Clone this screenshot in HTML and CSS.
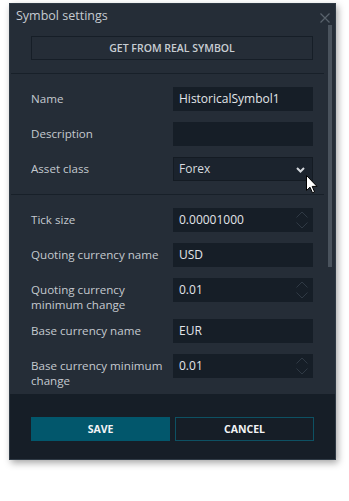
FILE: index.html
```html
<!DOCTYPE html>
<html>
<head>
<meta charset="utf-8">
<link rel="stylesheet" href="styles.css">
</head>
<body>
<div class="dialog">
  <div class="header">
    <span class="title">Symbol settings</span>
    <svg class="close" width="10" height="10" viewBox="0 0 10 10"><path d="M0.5 0.5 L9.5 9.5 M9.5 0.5 L0.5 9.5" stroke="#59626c" stroke-width="1.2" fill="none"/></svg>
  </div>
  <div class="scroll">
    <div class="content">
      <div class="top">
        <button class="btn-outline">GET FROM REAL SYMBOL</button>
      </div>
      <div class="sep"></div>
      <div class="section">
        <div class="row"><label class="lbl">Name</label><div class="field">HistoricalSymbol1</div></div>
        <div class="row"><label class="lbl">Description</label><div class="field"></div></div>
        <div class="row"><label class="lbl">Asset class</label><div class="field select">Forex
          <svg class="chev" width="9" height="6" viewBox="0 0 9 6"><path d="M1 1 L4.5 4.5 L8 1" stroke="#d3d7dc" stroke-width="2" fill="none"/></svg>
        </div></div>
      </div>
      <div class="sep"></div>
      <div class="section">
        <div class="row"><label class="lbl">Tick size</label><div class="field num">0.00001000<span class="spin"><svg width="12" height="18" viewBox="0 0 12 18"><path d="M0.5 6.5 L6 1 L11.5 6.5 M0.5 11.5 L6 17 L11.5 11.5" stroke="#2f3944" stroke-width="1" fill="none"/></svg></span></div></div>
        <div class="row"><label class="lbl">Quoting currency name</label><div class="field">USD</div></div>
        <div class="row"><label class="lbl">Quoting currency minimum change</label><div class="field num">0.01<span class="spin"><svg width="12" height="18" viewBox="0 0 12 18"><path d="M0.5 6.5 L6 1 L11.5 6.5 M0.5 11.5 L6 17 L11.5 11.5" stroke="#2f3944" stroke-width="1" fill="none"/></svg></span></div></div>
        <div class="row"><label class="lbl">Base currency name</label><div class="field">EUR</div></div>
        <div class="row"><label class="lbl">Base currency minimum change</label><div class="field num">0.01<span class="spin"><svg width="12" height="18" viewBox="0 0 12 18"><path d="M0.5 6.5 L6 1 L11.5 6.5 M0.5 11.5 L6 17 L11.5 11.5" stroke="#2f3944" stroke-width="1" fill="none"/></svg></span></div></div>
      </div>
    </div>
    <div class="track"><div class="thumb"></div></div>
  </div>
  <div class="footer">
    <button class="btn-save">SAVE</button>
    <button class="btn-cancel">CANCEL</button>
  </div>
</div>
<svg class="cursor" width="12" height="19" viewBox="0 0 12 19"><path d="M0.5 0.5 L0.5 15.5 L4 12.2 L6.5 17.8 L8.6 16.9 L6.2 11.4 L11 11.4 Z" fill="#fff" stroke="#000" stroke-width="1" stroke-linejoin="round"/></svg>
</body>
</html>
```
FILE: styles.css
```css
* { box-sizing: border-box; }
html, body { margin: 0; padding: 0; background: #ffffff; }
body {
  font-family: "Open Sans", "Noto Sans", sans-serif;
  font-size: 11.6px;
  color: #c4c9cf;
  position: relative;
  width: 349px;
  height: 501px;
  overflow: hidden;
}
.dialog {
  margin: 3px 0 0 9px;
  width: 327px;
  height: 457px;
  background: #252d37;
  border: 1px solid #2f3a45;
  display: flex;
  flex-direction: column;
  box-shadow: 2px 3px 7px rgba(0, 0, 0, 0.35);
}
.header {
  height: 21px;
  flex: none;
  display: flex;
  align-items: center;
  justify-content: space-between;
  padding: 0 5px 0 6px;
}
.title {
  font-size: 12.5px;
  color: #c6cbd1;
  line-height: 16px;
  margin-top: 3px;
}
.close { margin-top: 6px; }
.scroll {
  height: 369px;
  flex: none;
  display: flex;
  overflow: hidden;
}
.content { width: 316px; flex: none; }
.top { padding: 11px 13px 13px 21px; }
.btn-outline {
  display: block;
  width: 282px;
  height: 24px;
  background: #252d37;
  border: 1px solid #161e27;
  color: #c8cdd3;
  font-family: inherit;
  font-size: 10.5px;
  font-weight: 600;
  padding: 0;
}
.sep { height: 1px; background: #182029; margin-left: 1px; width: 313px; }
.section {
  padding: 13px 0 13px 21px;
  display: flex;
  flex-direction: column;
  gap: 11px;
}
.row { display: flex; align-items: flex-start; }
.lbl {
  width: 142px;
  flex: none;
  padding: 4px 4px 0 0;
  margin-bottom: -4px;
  line-height: 15px;
  color: #c4c9cf;
}
.field {
  width: 140px;
  height: 24px;
  flex: none;
  background: #161e27;
  color: #e2e5e9;
  padding: 0 6px;
  display: flex;
  align-items: center;
  justify-content: space-between;
  line-height: 24px;
  font-size: 12px;
}
.select {
  background: #1b232d;
  border: 1px solid #141b23;
  padding: 0 7px 0 5px;
  color: #d6dadf;
}
.chev { margin-top: 1px; }
.spin { display: flex; align-items: center; margin-right: -1px; }
.track { width: 8px; flex: none; padding-left: 2px; }
.thumb { width: 4px; height: 242px; background: #4a535d; }
.footer {
  flex: 1;
  background: #161e27;
  display: flex;
  gap: 5px;
  padding: 22px 0 0 21px;
  border-top: 1px solid #161e27;
}
.btn-save, .btn-cancel {
  width: 139px;
  height: 24px;
  font-family: inherit;
  font-size: 10.5px;
  font-weight: 700;
  color: #f2f4f6;
  padding: 0;
}
.btn-save { background: #02576c; border: none; }
.btn-cancel { background: #161e27; border: 1px solid #0d5163; }
.cursor { position: absolute; left: 306px; top: 175px; }
```
